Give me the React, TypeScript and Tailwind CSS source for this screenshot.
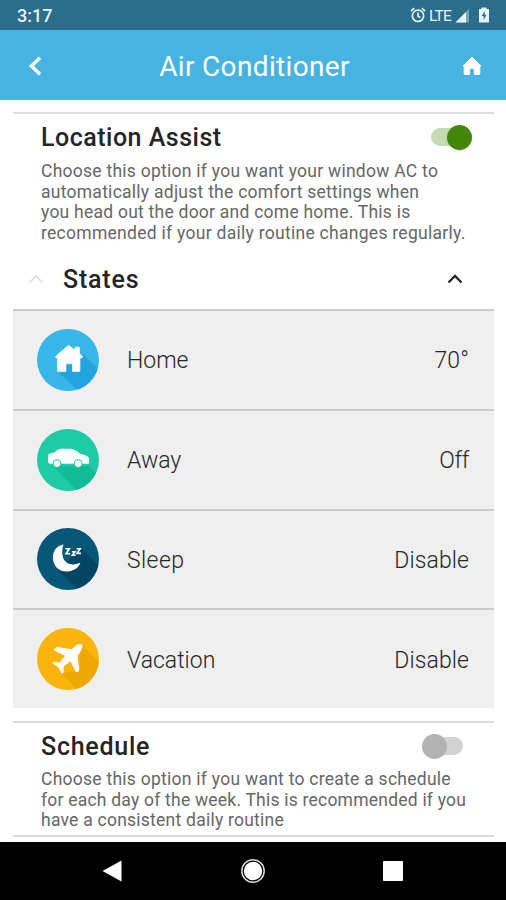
import type { ReactNode } from "react";

interface StateItem {
  id: string;
  label: string;
  value: string;
  labelClass: string;
  valueClass: string;
  icon: ReactNode;
}

function HomeIcon() {
  return (
    <svg viewBox="0 0 62 62" className="h-[62px] w-[62px]">
      <defs>
        <clipPath id="clip-home">
          <circle cx="31" cy="31" r="31" />
        </clipPath>
      </defs>
      <circle cx="31" cy="31" r="31" fill="#37b6ea" />
      <path clipPath="url(#clip-home)" d="M46 25L64 43V64H44L20 42Z" fill="#22a4df" />
      <path
        d="M31.5 16.2L38 21V18.2H42.5V24.6L45.8 27.6L44.6 29H43V41.8Q43 42.6 42.2 42.6H35.5V34.8H29V42.6H21.2Q20.4 42.6 20.4 41.8V29H19Q18 28 19 27Z"
        fill="#fff"
        stroke="#fff"
        strokeWidth="0.6"
        strokeLinejoin="round"
      />
    </svg>
  );
}

function CarIcon() {
  return (
    <svg viewBox="0 0 62 62" className="h-[62px] w-[62px]">
      <defs>
        <clipPath id="clip-car">
          <circle cx="31" cy="31" r="31" />
        </clipPath>
      </defs>
      <circle cx="31" cy="31" r="31" fill="#1dcba6" />
      <path clipPath="url(#clip-car)" d="M16 37H52L64 49V64H42Z" fill="#12bc98" />
      <path
        d="M11.4 26Q11 24.6 13.5 24.2L17.5 23.6Q20.5 20 24 19.8H34Q37.5 20 43.5 25Q50.5 26 51.8 28.8Q52.8 31.5 52 34.2Q51.4 34.8 50 34.8H13Q11 34.8 11 32Z"
        fill="#fff"
      />
      <circle cx="20" cy="34.6" r="4.3" fill="#1dcba6" />
      <circle cx="41.2" cy="34.6" r="4.3" fill="#1dcba6" />
      <circle cx="20" cy="34.6" r="3.3" fill="#fff" />
      <circle cx="41.2" cy="34.6" r="3.3" fill="#fff" />
    </svg>
  );
}

function SleepIcon() {
  return (
    <svg viewBox="0 0 62 62" className="h-[62px] w-[62px]">
      <defs>
        <clipPath id="clip-sleep">
          <circle cx="31" cy="31" r="31" />
        </clipPath>
      </defs>
      <circle cx="31" cy="31" r="31" fill="#075878" />
      <path clipPath="url(#clip-sleep)" d="M45 21L64 40V64H43L20 41Z" fill="#034563" />
      <path
        d="M26.5 16.5C19 17.6 15.6 24 15.9 30C16.2 38.5 22.5 44 30.5 43.6C37 43.2 42 39.5 43.4 34.6C36 38.5 28.5 36 26.2 30C24.6 25.5 25 20 26.5 16.5Z"
        fill="#fff"
      />
      <g fill="none" stroke="#fff" strokeWidth="1.6" strokeLinejoin="miter">
        <path d="M28.4 20.8H32.4L29 25.8H33.2" />
        <path d="M35 23.8H38L35.4 27.2H38.6" />
        <path d="M39.6 20.8H43.2L40 25.4H44" />
      </g>
    </svg>
  );
}

function PlaneIcon() {
  return (
    <svg viewBox="0 0 62 62" className="h-[62px] w-[62px]">
      <defs>
        <clipPath id="clip-plane">
          <circle cx="31" cy="31" r="31" />
        </clipPath>
      </defs>
      <circle cx="31" cy="31" r="31" fill="#fbb40b" />
      <path clipPath="url(#clip-plane)" d="M45 17L64 36V64H43L24 45L40 43Z" fill="#eda806" />
      <path
        d="M44.8 16.6C43 15 39.5 16.8 37.4 18.8L34.4 21.2L20.5 18.9Q19 19 16.8 21.2Q17 22.6 18.6 23.2L28 27.8L22.6 34.4L16.6 34Q15.6 34.4 15.6 35.4L21.4 39.2L24.6 45.4Q25.8 45.6 26.6 44.4L26.6 38.6L33.4 33.2L38.4 43Q39.2 44.8 41 44L42.4 41.6L40.4 27.8L43 24.2C45 21.6 46.4 18.6 44.8 16.6Z"
        fill="#fff"
      />
    </svg>
  );
}

const states: StateItem[] = [
  { id: "home", label: "Home", value: "70°", labelClass: "tracking-[0px]", valueClass: "tracking-[0.1px]", icon: <HomeIcon /> },
  { id: "away", label: "Away", value: "Off", labelClass: "-tracking-[0.1px]", valueClass: "-tracking-[0.4px]", icon: <CarIcon /> },
  { id: "sleep", label: "Sleep", value: "Disable", labelClass: "tracking-[0.4px]", valueClass: "tracking-[0.1px]", icon: <SleepIcon /> },
  { id: "vacation", label: "Vacation", value: "Disable", labelClass: "tracking-[0px]", valueClass: "tracking-[0.1px]", icon: <PlaneIcon /> },
];

function StatusBar() {
  return (
    <div className="flex h-[30px] items-center justify-between bg-[#2b6d8b] pl-[17px] pr-[16px] text-[#e6f4fa]">
      <span className="text-[18px] font-medium">3:17</span>
      <div className="flex items-center">
        <svg viewBox="0 0 16 16" className="h-4 w-4" fill="none" stroke="currentColor" strokeWidth="1.7">
          <circle cx="8" cy="8.8" r="5.7" />
          <path d="M8 5.6V9L10.4 10.6M1 4L4.2 1.2M15 4L11.8 1.2" />
        </svg>
        <span className="ml-[3px] pt-[2px] text-[15.5px] leading-5 tracking-[-0.8px]">LTE</span>
        <svg viewBox="0 0 15 15" className="ml-[4px] h-[15px] w-[15px]">
          <path d="M0.5 14.5L14 1V14.5Z" fill="currentColor" opacity="0.4" />
          <path d="M0.5 14.5L11 4V14.5Z" fill="currentColor" />
        </svg>
        <svg viewBox="0 0 12 16" className="ml-[8px] h-4 w-3">
          <path d="M1 2H3.5V0.5H8.5V2H11V15.5H1Z" fill="currentColor" />
          <path d="M6.8 4L3.6 9H5.6V13L8.6 7.8H6.6Z" fill="#2b6d8b" />
        </svg>
      </div>
    </div>
  );
}

function Header() {
  return (
    <header className="flex h-[70px] items-center justify-between bg-[#47b3e2] pt-[2px] pl-[28px] pr-[24px] text-white">
      <svg viewBox="0 0 14 20" className="h-5 w-[14px]" fill="none" stroke="currentColor" strokeWidth="3.4">
        <path d="M12 1.8L3.4 10L12 18.2" />
      </svg>
      <h1 className="ml-[5px] pt-[2px] text-[28px] tracking-[0.35px]">Air Conditioner</h1>
      <svg viewBox="0 0 20 20" className="h-5 w-5">
        <path
          d="M10 1.2L19 10H17.8V18.4H12.4V14Q12.4 12 10 12T7.6 14V18.4H2.2V10H1Z"
          fill="currentColor"
          stroke="currentColor"
          strokeWidth="1"
          strokeLinejoin="round"
        />
      </svg>
    </header>
  );
}

function Toggle({ on }: { on: boolean }) {
  return on ? (
    <div className="flex h-[26px] w-[41px] items-center rounded-full">
      <div className="h-[18px] w-[28px] rounded-l-full bg-[#c5dcb3]" />
      <div className="-ml-[12px] h-[25px] w-[25px] shrink-0 rounded-full bg-[#42860b] shadow-sm" />
    </div>
  ) : (
    <div className="flex h-[26px] w-[41px] items-center rounded-full">
      <div className="z-10 h-[25px] w-[25px] shrink-0 rounded-full bg-[#b2b2b2]" />
      <div className="-ml-[12px] h-[18px] w-[28px] rounded-r-full bg-[#d2d2d2]" />
    </div>
  );
}

export default function App() {
  return (
    <div className="flex h-[900px] w-[506px] flex-col overflow-hidden bg-white font-[Roboto,sans-serif]">
      <StatusBar />
      <Header />

      <main className="flex flex-1 flex-col pt-[12px] pr-[12px] pl-[13px]">
        <section className="h-[136px] border-t-2 border-[#dedede] pl-[28px]">
          <div className="flex h-[46px] items-center justify-between pr-[22px]">
            <h2 className="pt-[2px] text-[25px] font-medium tracking-[0.5px] text-[#252525]">Location Assist</h2>
            <Toggle on />
          </div>
          <p className="flex flex-col pt-px text-[17.5px] leading-[20.6px] whitespace-nowrap text-[#666]">
            <span className="tracking-[0.26px]">Choose this option if you want your window AC to</span>
            <span className="tracking-[0.26px]">automatically adjust the comfort settings when</span>
            <span className="tracking-[0.24px]">you head out the door and come home. This is</span>
            <span className="tracking-[0.28px]">recommended if your daily routine changes regularly.</span>
          </p>
        </section>

        <div className="flex h-[61px] items-center pr-[31px] pl-[15px]">
          <svg viewBox="0 0 16 10" className="h-[10px] w-4" fill="none" stroke="#dcdcdc" strokeWidth="1.6">
            <path d="M1.5 8.5L8 2L14.5 8.5" />
          </svg>
          <h2 className="ml-[19px] flex-1 pt-[2px] text-[25px] font-medium tracking-[0.8px] text-[#252525]">States</h2>
          <svg viewBox="0 0 16 10" className="h-[10px] w-4" fill="none" stroke="#252525" strokeWidth="2.3">
            <path d="M1.5 8.5L8 2L14.5 8.5" />
          </svg>
        </div>

        <ul className="h-[399px] bg-[#efefef]">
          {states.map((item) => (
            <li key={item.id} className="flex h-[99.8px] items-center border-t-2 border-[#cbcbcb] pr-[25px] pl-[24px]">
              {item.icon}
              <span className={`ml-[28px] flex-1 pt-[3px] text-[23px] font-light text-[#262626] ${item.labelClass}`}>{item.label}</span>
              <span className={`pt-[3px] text-[23px] font-light text-[#262626] ${item.valueClass}`}>{item.value}</span>
            </li>
          ))}
        </ul>

        <section className="mt-[13px] h-[116px] border-y-2 border-[#dadada] pl-[28px]">
          <div className="flex h-[46px] items-center justify-between pr-[31px]">
            <h2 className="pt-px text-[25px] font-medium tracking-[0.75px] text-[#252525]">Schedule</h2>
            <Toggle on={false} />
          </div>
          <p className="flex flex-col text-[17.5px] leading-[20.6px] whitespace-nowrap text-[#666]">
            <span className="tracking-[0.26px]">Choose this option if you want to create a schedule</span>
            <span className="tracking-[0.22px]">for each day of the week. This is recommended if you</span>
            <span className="tracking-[0.24px]">have a consistent daily routine</span>
          </p>
        </section>
      </main>

      <nav className="flex h-[58px] shrink-0 items-center bg-black pl-[102px]">
        <svg viewBox="0 0 20 22" className="h-[22px] w-5">
          <path d="M0.5 11L19.5 0.5V21.5Z" fill="#fff" />
        </svg>
        <svg viewBox="0 0 26 26" className="ml-[118px] h-[26px] w-[26px]">
          <circle cx="13" cy="13" r="11.2" fill="none" stroke="#ddd" strokeWidth="1.5" />
          <circle cx="13" cy="13" r="9.2" fill="#fff" />
        </svg>
        <div className="ml-[117px] h-5 w-5 rounded-[1px] bg-white" />
      </nav>
    </div>
  );
}
